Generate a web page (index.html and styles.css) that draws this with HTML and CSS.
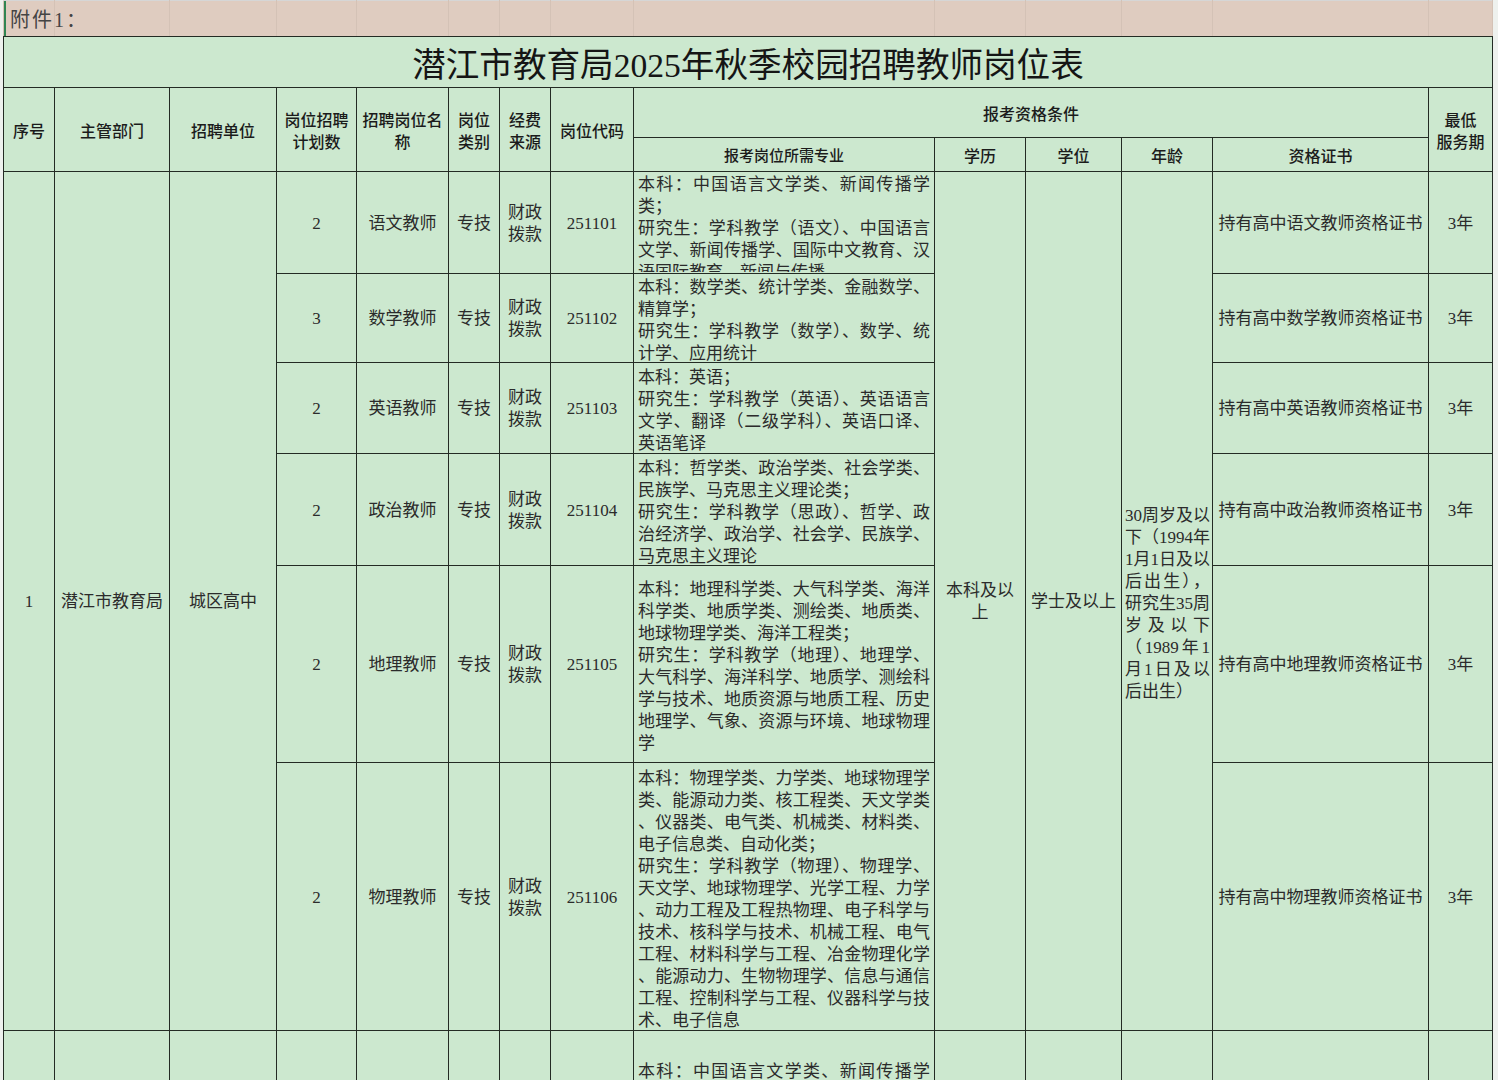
FILE: index.html
```html
<!DOCTYPE html>
<html lang="zh-CN">
<head>
<meta charset="utf-8">
<title>潜江市教育局2025年秋季校园招聘教师岗位表</title>
<link rel="stylesheet" href="styles.css">
</head>
<body>
<div class="sheet">
<table class="grid">
  <colgroup>
    <col class="c-no"><col class="c-dept"><col class="c-unit"><col class="c-plan"><col class="c-post"><col class="c-type"><col class="c-fund"><col class="c-code"><col class="c-major"><col class="c-edu"><col class="c-deg"><col class="c-age"><col class="c-cert"><col class="c-term">
  </colgroup>
  <tr class="r-top">
    <td class="note">附件1：</td><td></td><td></td><td></td><td></td><td></td><td></td><td></td><td></td><td></td><td></td><td></td><td></td><td></td>
  </tr>
  <tr class="r-title">
    <td colspan="14" class="title">潜江市教育局2025年秋季校园招聘教师岗位表</td>
  </tr>
  <tr class="r-h1">
    <th rowspan="2">序号</th>
    <th rowspan="2">主管部门</th>
    <th rowspan="2">招聘单位</th>
    <th rowspan="2">岗位招聘<br>计划数</th>
    <th rowspan="2">招聘岗位名<br>称</th>
    <th rowspan="2">岗位<br>类别</th>
    <th rowspan="2">经费<br>来源</th>
    <th rowspan="2">岗位代码</th>
    <th colspan="5">报考资格条件</th>
    <th rowspan="2">最低<br>服务期</th>
  </tr>
  <tr class="r-h2">
    <th class="small">报考岗位所需专业</th>
    <th>学历</th>
    <th>学位</th>
    <th>年龄</th>
    <th>资格证书</th>
  </tr>
  <tr class="r1">
    <td rowspan="6">1</td>
    <td rowspan="6">潜江市教育局</td>
    <td rowspan="6">城区高中</td>
    <td>2</td>
    <td>语文教师</td>
    <td>专技</td>
    <td>财政<br>拨款</td>
    <td>251101</td>
    <td class="major top"><div class="clip">
      <span class="ln f">本科：中国语言文学类、新闻传播学</span>
      <span class="ln">类；</span>
      <span class="ln f">研究生：学科教学（语文）、中国语言</span>
      <span class="ln f">文学、新闻传播学、国际中文教育、汉</span>
      <span class="ln">语国际教育、新闻与传播</span>
    </div></td>
    <td rowspan="6">本科及以<br>上</td>
    <td rowspan="6">学士及以上</td>
    <td rowspan="6" class="age"><div class="txt">
      <span class="ln f">30周岁及以</span>
      <span class="ln f">下（1994年</span>
      <span class="ln f">1月1日及以</span>
      <span class="ln f">后出生），</span>
      <span class="ln f">研究生35周</span>
      <span class="ln f">岁及以下</span>
      <span class="ln f">（1989年1</span>
      <span class="ln f">月1日及以</span>
      <span class="ln">后出生）</span>
    </div></td>
    <td>持有高中语文教师资格证书</td>
    <td>3年</td>
  </tr>
  <tr class="r2">
    <td>3</td>
    <td>数学教师</td>
    <td>专技</td>
    <td>财政<br>拨款</td>
    <td>251102</td>
    <td class="major"><div class="txt">
      <span class="ln f">本科：数学类、统计学类、金融数学、</span>
      <span class="ln">精算学；</span>
      <span class="ln f">研究生：学科教学（数学）、数学、统</span>
      <span class="ln">计学、应用统计</span>
    </div></td>
    <td>持有高中数学教师资格证书</td>
    <td>3年</td>
  </tr>
  <tr class="r3">
    <td>2</td>
    <td>英语教师</td>
    <td>专技</td>
    <td>财政<br>拨款</td>
    <td>251103</td>
    <td class="major"><div class="txt">
      <span class="ln">本科：英语；</span>
      <span class="ln f">研究生：学科教学（英语）、英语语言</span>
      <span class="ln f">文学、翻译（二级学科）、英语口译、</span>
      <span class="ln">英语笔译</span>
    </div></td>
    <td>持有高中英语教师资格证书</td>
    <td>3年</td>
  </tr>
  <tr class="r4">
    <td>2</td>
    <td>政治教师</td>
    <td>专技</td>
    <td>财政<br>拨款</td>
    <td>251104</td>
    <td class="major"><div class="txt">
      <span class="ln f">本科：哲学类、政治学类、社会学类、</span>
      <span class="ln">民族学、马克思主义理论类；</span>
      <span class="ln f">研究生：学科教学（思政）、哲学、政</span>
      <span class="ln f">治经济学、政治学、社会学、民族学、</span>
      <span class="ln">马克思主义理论</span>
    </div></td>
    <td>持有高中政治教师资格证书</td>
    <td>3年</td>
  </tr>
  <tr class="r5">
    <td>2</td>
    <td>地理教师</td>
    <td>专技</td>
    <td>财政<br>拨款</td>
    <td>251105</td>
    <td class="major"><div class="txt">
      <span class="ln f">本科：地理科学类、大气科学类、海洋</span>
      <span class="ln f">科学类、地质学类、测绘类、地质类、</span>
      <span class="ln">地球物理学类、海洋工程类；</span>
      <span class="ln f">研究生：学科教学（地理）、地理学、</span>
      <span class="ln f">大气科学、海洋科学、地质学、测绘科</span>
      <span class="ln f">学与技术、地质资源与地质工程、历史</span>
      <span class="ln f">地理学、气象、资源与环境、地球物理</span>
      <span class="ln">学</span>
    </div></td>
    <td>持有高中地理教师资格证书</td>
    <td>3年</td>
  </tr>
  <tr class="r6">
    <td>2</td>
    <td>物理教师</td>
    <td>专技</td>
    <td>财政<br>拨款</td>
    <td>251106</td>
    <td class="major"><div class="txt">
      <span class="ln f">本科：物理学类、力学类、地球物理学</span>
      <span class="ln f">类、能源动力类、核工程类、天文学类</span>
      <span class="ln f">、仪器类、电气类、机械类、材料类、</span>
      <span class="ln">电子信息类、自动化类；</span>
      <span class="ln f">研究生：学科教学（物理）、物理学、</span>
      <span class="ln f">天文学、地球物理学、光学工程、力学</span>
      <span class="ln f">、动力工程及工程热物理、电子科学与</span>
      <span class="ln f">技术、核科学与技术、机械工程、电气</span>
      <span class="ln f">工程、材料科学与工程、冶金物理化学</span>
      <span class="ln f">、能源动力、生物物理学、信息与通信</span>
      <span class="ln f">工程、控制科学与工程、仪器科学与技</span>
      <span class="ln">术、电子信息</span>
    </div></td>
    <td>持有高中物理教师资格证书</td>
    <td>3年</td>
  </tr>
  <tr class="r7">
    <td></td><td></td><td></td><td></td><td></td><td></td><td></td><td></td>
    <td class="major"><div class="txt">
      <span class="ln f">本科：中国语言文学类、新闻传播学</span>
      <span class="ln">类；</span>
      <span class="ln f">研究生：学科教学（语文）、中国语言</span>
      <span class="ln f">文学、新闻传播学、国际中文教育、汉</span>
      <span class="ln">语国际教育、新闻与传播</span>
    </div></td>
    <td></td><td></td><td></td><td></td><td></td>
  </tr>
</table>
</div>
</body>
</html>
```
FILE: styles.css
```css
html, body {
  margin: 0;
  padding: 0;
  height: 1080px;
  overflow: hidden;
  background: #eef1ee;
}

.sheet {
  padding-left: 3px;
}

.grid {
  border-collapse: collapse;
  table-layout: fixed;
  width: 1489px;
  background: #cce8cf;
  font-family: "Liberation Serif", "Noto Sans CJK SC", serif;
  font-size: 17px;
  line-height: 22px;
  color: #2b2b2b;
}

.c-no { width: 51px; }
.c-dept { width: 115px; }
.c-unit { width: 107px; }
.c-plan { width: 80px; }
.c-post { width: 92px; }
.c-type { width: 51px; }
.c-fund { width: 51px; }
.c-code { width: 83px; }
.c-major { width: 301px; }
.c-edu { width: 91px; }
.c-deg { width: 96px; }
.c-age { width: 91px; }
.c-cert { width: 216px; }
.c-term { width: 64px; }

.grid td,
.grid th {
  border: 1px solid #232b24;
  padding: 2px 2px 0;
  text-align: center;
  vertical-align: middle;
}

.grid th {
  font-family: "Noto Sans CJK SC", sans-serif;
  font-weight: 500;
  font-size: 16px;
  line-height: 22px;
  color: #1b1b1b;
  padding: 0 2px;
}

.grid th.small {
  font-size: 15px;
}

/* top spreadsheet row */
.r-top {
  height: 36px;
  background: #dfccc0;
}

.grid .r-top td {
  border-top: 1px solid #d6d6d6;
  border-left: 1px solid #d4c2b6;
  border-right: 1px solid #d4c2b6;
  border-bottom: 1px solid #232b24;
  padding: 0;
}

.grid .r-top td.note {
  box-shadow: inset 2px 0 0 #2f8552;
  text-align: left;
  white-space: nowrap;
  padding: 3px 0 0 6px;
  font-family: "Liberation Serif", "Noto Sans CJK SC", serif;
  font-size: 20px;
  letter-spacing: 2px;
  color: #444;
}

.r-title { height: 51px; }

.grid td.title {
  font-size: 33.6px;
  line-height: 36px;
  padding: 8px 0 0;
  color: #151515;
}

.r-h1 { height: 50px; }
.r-h2 { height: 34px; }
.r1 { height: 102px; }
.r2 { height: 89px; }
.r3 { height: 91px; }
.r4 { height: 112px; }
.r5 { height: 197px; }
.r6 { height: 268px; }
.r7 { height: 164px; }

.grid td.major {
  text-align: left;
  padding: 0 4px;
}

.grid td.top {
  vertical-align: top;
}

.clip {
  height: 98px;
  padding-top: 2px;
  overflow: hidden;
}

.txt {
  padding-top: 3px;
  margin-bottom: -3px;
}

.ln {
  display: block;
  text-align: left;
}

.ln.f {
  text-align: justify;
  text-align-last: justify;
}

.grid td.age {
  text-align: left;
  padding: 0 2px 0 3px;
}
```
